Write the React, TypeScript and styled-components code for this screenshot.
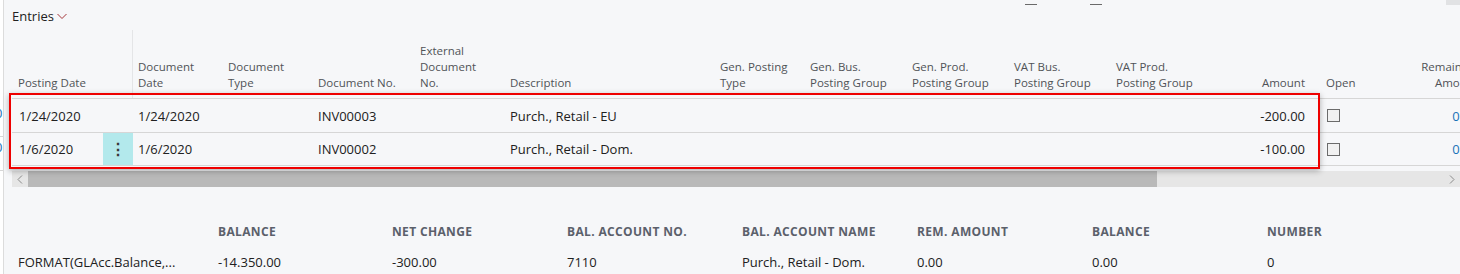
import React from "react";
import styled, { createGlobalStyle } from "styled-components";

const GlobalStyle = createGlobalStyle`
  body {
    margin: 0;
    background: #f6f7f9;
    font-family: "Open Sans", "Noto Sans", sans-serif;
    color: #212121;
  }
`;

const Page = styled.div`
  width: 1460px;
  height: 274px;
  overflow: hidden;
  display: flex;
  background: #f6f7f9;
`;

const LeftEdge = styled.div`
  width: 3px;
  flex: none;
  background: #ffffff;
  border-right: 1px solid #dcdcdc;
  overflow: hidden;
  padding-top: 103px;
`;

const EdgeCell = styled.div`
  height: 33px;
  border-bottom: 1px solid #d6d6d6;
  font-size: 13px;
  line-height: 20px;
  color: #1a73b8;
  text-indent: -5px;
`;

const Main = styled.div`
  flex: 1;
  min-width: 0;
  padding-left: 8px;
`;

const TopBar = styled.div`
  height: 30px;
  display: grid;
  grid-template-columns: 1013px 65px 356px 14px;
`;

const Title = styled.div`
  display: flex;
  align-items: center;
  gap: 3px;
  height: 32px;
  font-size: 13px;
  color: #212121;
`;

const Dash = styled.div`
  margin-top: 4px;
  width: 12px;
  height: 1px;
  background: #6a6a6a;
`;

const Corner = styled.div`
  height: 5px;
  background: #e1e2e4;
`;

const cols =
  "91px 30px 90px 90px 102px 90px 210px 90px 102px 102px 102px 102px 108px 79px 84px";

const Table = styled.div`
  position: relative;
  width: 1472px;
`;

const HeadRow = styled.div`
  display: grid;
  grid-template-columns: ${cols};
  height: 68px;
  align-items: end;
`;

const HeadCell = styled.div<{ $right?: boolean; $pl?: number; $pr?: number; $sep?: boolean }>`
  align-self: stretch;
  display: flex;
  flex-direction: column;
  justify-content: flex-end;
  padding: 0 ${(p) => p.$pr ?? 5}px 7px ${(p) => p.$pl ?? 5}px;
  font-size: 11.5px;
  line-height: 16px;
  color: #505357;
  text-align: ${(p) => (p.$right ? "right" : "left")};
  white-space: nowrap;
  border-right: ${(p) => (p.$sep ? "1px solid #e4e5e7" : "none")};
`;

const Row = styled.div<{ $last?: boolean }>`
  display: grid;
  grid-template-columns: ${cols};
  height: 34px;
  box-sizing: border-box;
  border-top: 1px solid #d6d6d6;
  border-bottom: ${(p) => (p.$last ? "1px solid #d6d6d6" : "none")};
`;

const Cell = styled.div<{ $right?: boolean; $pl?: number; $pr?: number; $link?: boolean }>`
  display: flex;
  align-items: center;
  justify-content: ${(p) => (p.$right ? "flex-end" : "flex-start")};
  padding: 0 ${(p) => p.$pr ?? 5}px 0 ${(p) => p.$pl ?? 5}px;
  font-size: 13px;
  color: ${(p) => (p.$link ? "#1a73b8" : "#212121")};
  white-space: nowrap;
`;

const DotsCell = styled.div<{ $active?: boolean }>`
  display: flex;
  align-items: center;
  justify-content: center;
  background: ${(p) => (p.$active ? "#b3e9ec" : "transparent")};
  font-size: 16px;
  font-weight: 700;
  color: #3a3a3a;
`;

const Checkbox = styled.div`
  width: 13px;
  height: 13px;
  box-sizing: border-box;
  border: 1px solid #6b6b6b;
  background: #f1f1f1;
  margin-left: 1px;
`;

const Highlight = styled.div`
  position: absolute;
  left: -3px;
  top: 63px;
  width: 1311px;
  height: 76px;
  box-sizing: border-box;
  border: 2px solid #ee0000;
  box-shadow: 0 2px 6px rgba(0, 0, 0, 0.3);
  pointer-events: none;
`;

const Scrollbar = styled.div`
  margin-top: 5px;
  height: 16px;
  display: flex;
  align-items: stretch;
  background: #e6e6e6;
`;

const Arrow = styled.div`
  width: 16px;
  display: flex;
  align-items: center;
  justify-content: center;
  flex: none;
`;

const Thumb = styled.div`
  width: 1129px;
  background: #b9b9b9;
`;

const Track = styled.div`
  flex: 1;
`;

const Summary = styled.div`
  margin-top: 35px;
  display: grid;
  grid-template-columns: 200px 174px 175px 175px 175px 175px 175px 150px;
  row-gap: 10px;
  padding-left: 6px;
`;

const SumHead = styled.div`
  font-size: 12px;
  line-height: 20px;
  font-weight: 700;
  letter-spacing: 0.35px;
  text-transform: uppercase;
  color: #5b606b;
  white-space: nowrap;
`;

const SumValue = styled.div`
  font-size: 13px;
  line-height: 20px;
  color: #212121;
  white-space: nowrap;
`;

const Chevron = ({ dir }: { dir: "left" | "right" }) => (
  <svg width="6" height="9" viewBox="0 0 6 9">
    <polyline
      points={dir === "left" ? "5,0.5 1,4.5 5,8.5" : "1,0.5 5,4.5 1,8.5"}
      fill="none"
      stroke="#8a8a8a"
      strokeWidth="1"
    />
  </svg>
);

interface Column {
  lines: string[];
  right?: boolean;
  pl?: number;
  pr?: number;
}

const columns: Column[] = [
  { lines: ["Posting Date"], pl: 6 },
  { lines: [] },
  { lines: ["Document", "Date"] },
  { lines: ["Document", "Type"] },
  { lines: ["Document No."] },
  { lines: ["External", "Document", "No."] },
  { lines: ["Description"] },
  { lines: ["Gen. Posting", "Type"] },
  { lines: ["Gen. Bus.", "Posting Group"] },
  { lines: ["Gen. Prod.", "Posting Group"] },
  { lines: ["VAT Bus.", "Posting Group"] },
  { lines: ["VAT Prod.", "Posting Group"] },
  { lines: ["Amount"], right: true, pr: 16 },
  { lines: ["Open"] },
  { lines: ["Remaining", "Amount"], right: true, pr: 6 },
];

const entries = [
  { posting: "1/24/2020", docDate: "1/24/2020", docNo: "INV00003", desc: "Purch., Retail - EU", amount: "-200.00" },
  { posting: "1/6/2020", docDate: "1/6/2020", docNo: "INV00002", desc: "Purch., Retail - Dom.", amount: "-100.00" },
];

const summary = [
  ["", "FORMAT(GLAcc.Balance,..."],
  ["Balance", "-14.350.00"],
  ["Net Change", "-300.00"],
  ["Bal. Account No.", "7110"],
  ["Bal. Account Name", "Purch., Retail - Dom."],
  ["Rem. Amount", "0.00"],
  ["Balance", "0.00"],
  ["Number", "0"],
];

export default function App() {
  return (
    <Page>
      <GlobalStyle />
      <LeftEdge>
        <EdgeCell>0</EdgeCell>
        <EdgeCell>0</EdgeCell>
      </LeftEdge>
      <Main>
        <TopBar>
          <Title>
            Entries
            <svg width="10" height="7" viewBox="0 0 10 7">
              <polyline points="0.5,1 5,5.5 9.5,1" fill="none" stroke="#a4373a" strokeWidth="1" />
            </svg>
          </Title>
          <Dash />
          <Dash />
          <Corner />
        </TopBar>

        <Table>
          <HeadRow>
            {columns.map((c, i) => (
              <HeadCell key={i} $right={c.right} $pl={c.pl} $pr={c.pr} $sep={i === 1}>
                {c.lines.map((l) => (
                  <span key={l}>{l}</span>
                ))}
              </HeadCell>
            ))}
          </HeadRow>
          {entries.map((e, i) => (
            <Row key={e.docNo} $last={i === entries.length - 1}>
              <Cell $pl={7}>{e.posting}</Cell>
              <DotsCell $active={i === 1}>{i === 1 ? "⋮" : ""}</DotsCell>
              <Cell>{e.docDate}</Cell>
              <Cell />
              <Cell>{e.docNo}</Cell>
              <Cell />
              <Cell>{e.desc}</Cell>
              <Cell />
              <Cell />
              <Cell />
              <Cell />
              <Cell />
              <Cell $right $pr={16}>{e.amount}</Cell>
              <Cell>
                <Checkbox />
              </Cell>
              <Cell $right $pr={6} $link>0.00</Cell>
            </Row>
          ))}
          <Highlight />
        </Table>

        <Scrollbar>
          <Arrow>
            <Chevron dir="left" />
          </Arrow>
          <Thumb />
          <Track />
          <Arrow>
            <Chevron dir="right" />
          </Arrow>
        </Scrollbar>

        <Summary>
          {summary.map(([h], i) => (
            <SumHead key={"h" + i}>{h}</SumHead>
          ))}
          {summary.map(([, v], i) => (
            <SumValue key={"v" + i}>{v}</SumValue>
          ))}
        </Summary>
      </Main>
    </Page>
  );
}
